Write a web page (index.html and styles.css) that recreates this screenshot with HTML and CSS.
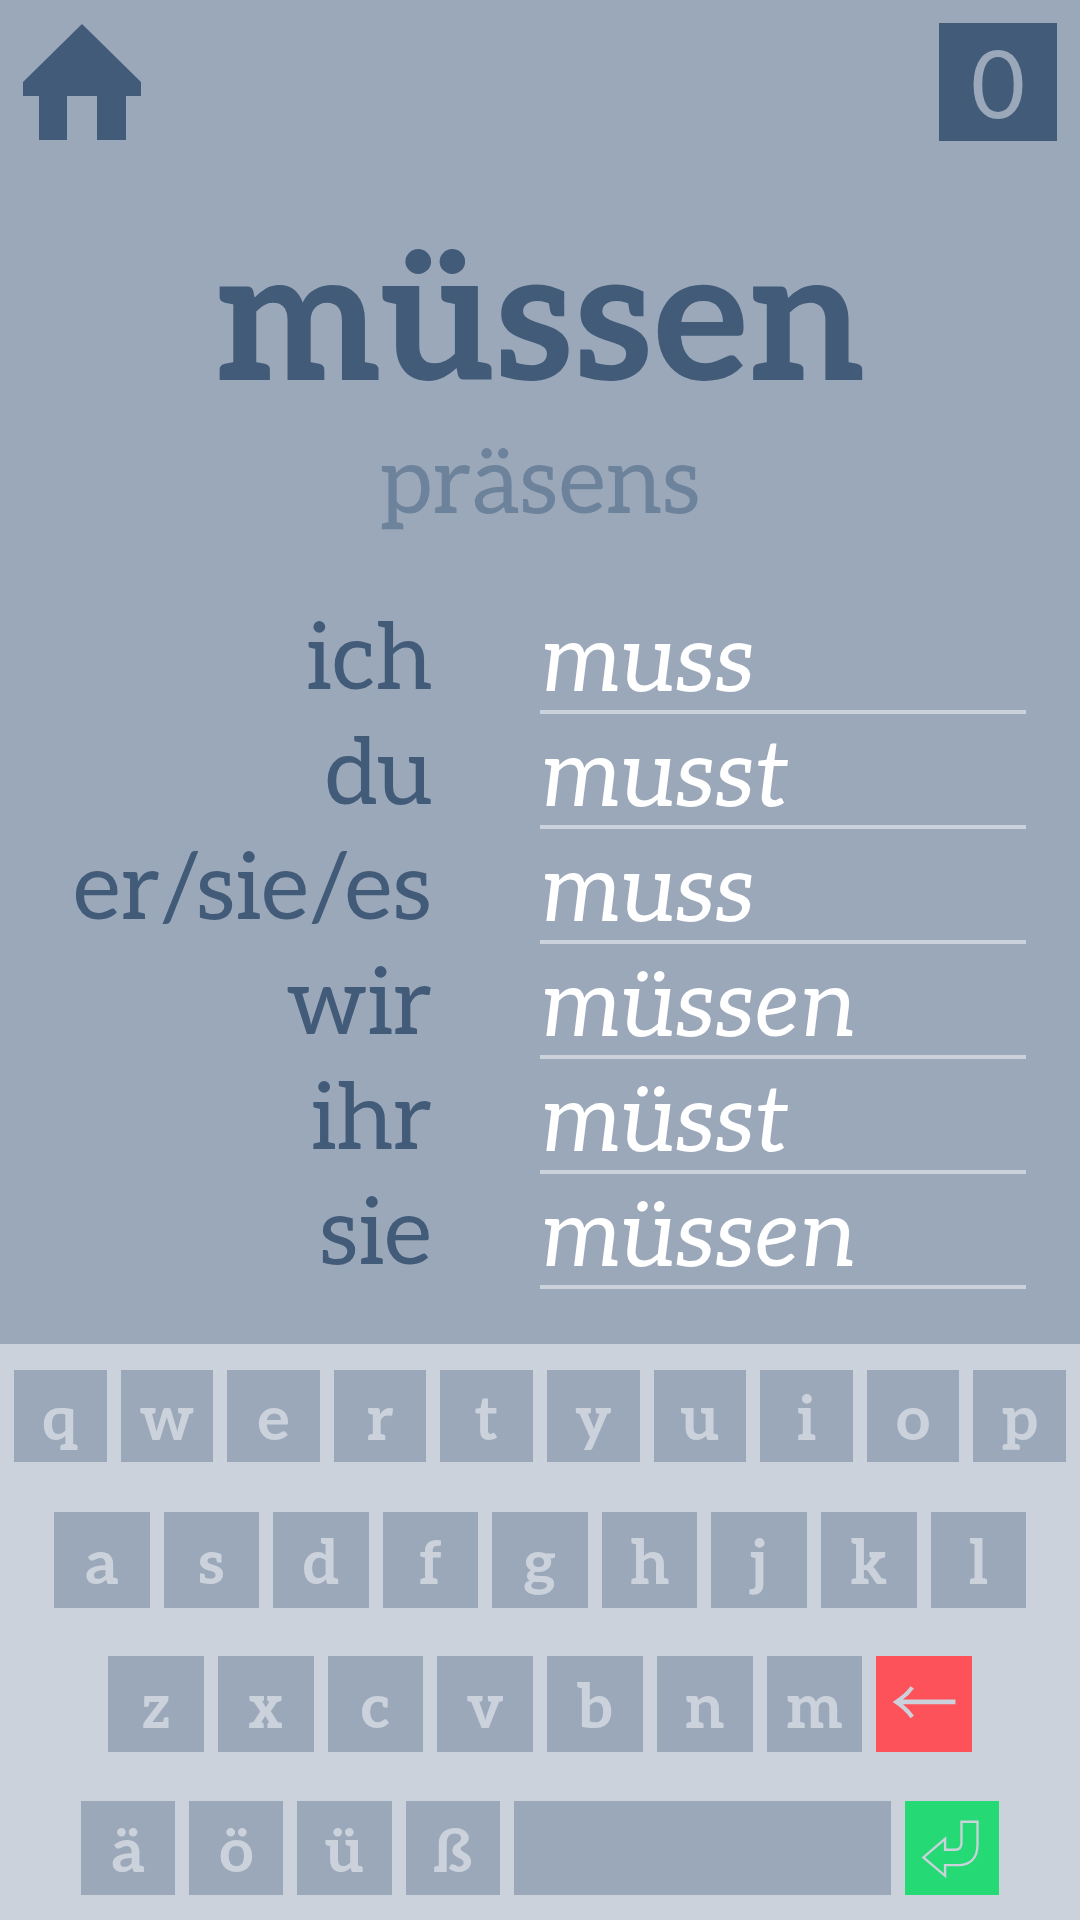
FILE: index.html
```html
<!DOCTYPE html>
<html lang="de">
<head>
<meta charset="utf-8">
<meta name="viewport" content="width=device-width, initial-scale=1">
<title>müssen – präsens</title>
<link rel="stylesheet" href="styles.css">
</head>
<body>
<header class="topbar">
  <a class="home" href="#" aria-label="Home">
    <svg viewBox="0 0 118 118" aria-hidden="true"><path d="M59 1L118 59V73H103V117H74V73H44V117H16V73H0V59Z"/></svg>
  </a>
  <div class="score">0</div>
</header>
<main class="exercise">
  <h1 class="verb">müssen</h1>
  <p class="tense">präsens</p>
  <form class="forms">
    <div class="row"><label class="pronoun" for="ich">ich</label><input class="answer" id="ich" value="muss"></div>
    <div class="row"><label class="pronoun" for="du">du</label><input class="answer" id="du" value="musst"></div>
    <div class="row"><label class="pronoun" for="er">er/sie/es</label><input class="answer" id="er" value="muss"></div>
    <div class="row"><label class="pronoun" for="wir">wir</label><input class="answer" id="wir" value="müssen"></div>
    <div class="row"><label class="pronoun" for="ihr">ihr</label><input class="answer" id="ihr" value="müsst"></div>
    <div class="row"><label class="pronoun" for="sie">sie</label><input class="answer" id="sie" value="müssen"></div>
  </form>
</main>
<section class="keyboard" aria-label="Tastatur">
  <div class="keys keys-top">
    <button class="key">q</button><button class="key">w</button><button class="key">e</button><button class="key">r</button><button class="key">t</button><button class="key">y</button><button class="key">u</button><button class="key">i</button><button class="key">o</button><button class="key">p</button>
  </div>
  <div class="keys keys-home">
    <button class="key">a</button><button class="key">s</button><button class="key">d</button><button class="key">f</button><button class="key">g</button><button class="key">h</button><button class="key">j</button><button class="key">k</button><button class="key">l</button>
  </div>
  <div class="keys keys-lower">
    <button class="key">z</button><button class="key">x</button><button class="key">c</button><button class="key">v</button><button class="key">b</button><button class="key">n</button><button class="key">m</button>
    <button class="key icon-key delete" aria-label="Löschen"><svg viewBox="0 0 288 288" aria-hidden="true"><path d="M50 138Q86 116 104 91L114 98Q100 118 81 131H239V145H81Q100 159 114 179L104 187Q86 161 50 138Z"/></svg></button>
  </div>
  <div class="keys keys-bottom">
    <button class="key">ä</button><button class="key">ö</button><button class="key">ü</button><button class="key">ß</button>
    <button class="key space" aria-label="Leerzeichen"></button>
    <button class="key icon-key enter" aria-label="Eingabe"><svg viewBox="0 0 282 282" aria-hidden="true"><path d="M169 62H217V130C217 169 197 192 158 192H120V224L55 169L120 113V146H150Q169 146 169 125Z"/></svg></button>
  </div>
</section>
</body>
</html>
```
FILE: styles.css
```css
* {
  box-sizing: border-box;
}

body {
  margin: 0;
  min-height: 100vh;
  display: flex;
  flex-direction: column;
  background: #9ba8b9;
  color: #425b79;
  font-family: Aleo, "DejaVu Serif Condensed", "DejaVu Serif", serif;
}

.topbar {
  display: flex;
  justify-content: space-between;
  padding: 23px;
}

.home,
.score {
  width: 118px;
  height: 118px;
}

.home svg {
  display: block;
  fill: #425b79;
}

.score {
  background: #425b79;
  color: #9ba8b9;
  font: 94px/118px Lato, sans-serif;
  text-align: center;
}

.exercise {
  flex: 1;
  display: flex;
  flex-direction: column;
  padding: 61px 0 55px;
}

.verb,
.tense {
  margin: 0;
  text-align: center;
}

.verb {
  font-size: 182px;
  line-height: 200px;
  font-weight: 700;
}

.tense {
  color: #6d829b;
  font-size: 92px;
  line-height: 120px;
}

.forms {
  margin-top: auto;
}

.row {
  display: grid;
  grid-template-columns: 40% 45%;
  grid-template-rows: 115px;
  column-gap: 10%;
}

.pronoun {
  font-size: 93px;
  line-height: 124px;
  text-align: right;
  white-space: nowrap;
}

.answer {
  width: 100%;
  height: 100%;
  min-width: 0;
  padding: 16px 0 0;
  border: 0;
  border-bottom: 4px solid #cbd2dc;
  border-radius: 0;
  background: none;
  color: #fff;
  font-family: inherit;
  font-size: 93px;
  font-style: italic;
  line-height: 93px;
  outline: none;
}

.keyboard {
  min-height: 30vh;
  display: grid;
  grid-template-rows: repeat(4, 1fr);
  background: #cbd2dc;
}

.keys {
  display: flex;
  align-items: center;
  gap: 14px;
}

.keys-top {
  padding: 0 14px;
}

.keys-home {
  padding: 0 5%;
}

.keys-lower {
  padding: 0 10%;
}

.keys-bottom {
  display: grid;
  grid-template-columns: repeat(4, 1fr) 4fr 1fr;
  padding: 0 7.5%;
}

.key {
  flex: 1;
  min-width: 0;
  aspect-ratio: 1;
  padding: 10px 0 0;
  border: 0;
  background: #9ba8b9;
  color: #cbd2dc;
  font-family: inherit;
  font-size: 62px;
  font-weight: 700;
  line-height: 70px;
}

.space {
  height: 100%;
  aspect-ratio: auto;
  max-height: 94px;
}

.icon-key {
  padding: 0;
}

.icon-key svg {
  display: block;
  width: 100%;
}

.delete {
  background: #fe525a;
}

.delete svg {
  fill: #cbd2dc;
}

.enter {
  background: #25da75;
}

.enter svg {
  fill: none;
  stroke: #cbd2dc;
  stroke-width: 7;
}
```
